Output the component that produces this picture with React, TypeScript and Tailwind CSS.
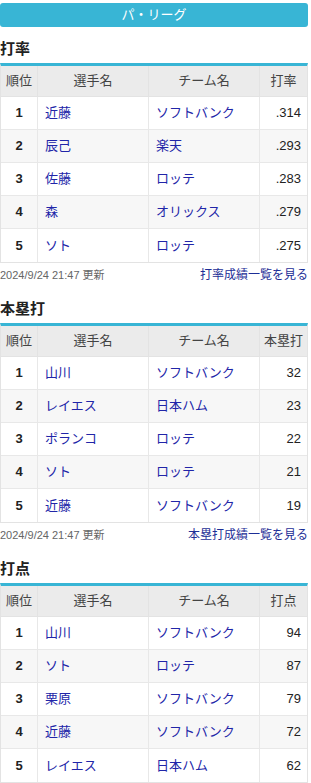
type Row = { rank: number; name: string; team: string; value: string };

type Section = {
  title: string;
  statLabel: string;
  linkText: string;
  rows: Row[];
};

const sections: Section[] = [
  {
    title: '打率',
    statLabel: '打率',
    linkText: '打率成績一覧を見る',
    rows: [
      { rank: 1, name: '近藤', team: 'ソフトバンク', value: '.314' },
      { rank: 2, name: '辰己', team: '楽天', value: '.293' },
      { rank: 3, name: '佐藤', team: 'ロッテ', value: '.283' },
      { rank: 4, name: '森', team: 'オリックス', value: '.279' },
      { rank: 5, name: 'ソト', team: 'ロッテ', value: '.275' },
    ],
  },
  {
    title: '本塁打',
    statLabel: '本塁打',
    linkText: '本塁打成績一覧を見る',
    rows: [
      { rank: 1, name: '山川', team: 'ソフトバンク', value: '32' },
      { rank: 2, name: 'レイエス', team: '日本ハム', value: '23' },
      { rank: 3, name: 'ポランコ', team: 'ロッテ', value: '22' },
      { rank: 4, name: 'ソト', team: 'ロッテ', value: '21' },
      { rank: 5, name: '近藤', team: 'ソフトバンク', value: '19' },
    ],
  },
  {
    title: '打点',
    statLabel: '打点',
    linkText: '',
    rows: [
      { rank: 1, name: '山川', team: 'ソフトバンク', value: '94' },
      { rank: 2, name: 'ソト', team: 'ロッテ', value: '87' },
      { rank: 3, name: '栗原', team: 'ソフトバンク', value: '79' },
      { rank: 4, name: '近藤', team: 'ソフトバンク', value: '72' },
      { rank: 5, name: 'レイエス', team: '日本ハム', value: '62' },
    ],
  },
];

function RankingTable({ section }: { section: Section }) {
  return (
    <div>
      <h3 className="h-[20px] mt-[12px] mb-[4px] text-[15px] leading-[20px] font-bold text-[#222]">
        {section.title}
      </h3>
      <div className="w-[308px] border border-[#e3e3e3] border-t-[3px] border-t-[#38b5d5]">
        <div className="grid grid-cols-[36px_111px_111px_1fr] h-[31px] bg-[#ebebeb] text-[13px] text-[#444] border-b border-[#e3e3e3]">
          <div className="flex items-center justify-center">順位</div>
          <div className="flex items-center justify-center border-l border-[#e3e3e3]">選手名</div>
          <div className="flex items-center justify-center border-l border-[#e3e3e3]">チーム名</div>
          <div className="flex items-center justify-center border-l border-[#e3e3e3]">{section.statLabel}</div>
        </div>
        {section.rows.map((r, i) => (
          <div
            key={r.rank}
            className={`grid grid-cols-[36px_111px_111px_1fr] h-[33px] text-[13px] ${i % 2 === 1 ? 'bg-[#f7f7f7]' : 'bg-white'} ${i < 4 ? 'border-b border-[#e8e8e8]' : ''}`}
          >
            <div className="flex items-center justify-center font-bold text-[#222]">{r.rank}</div>
            <div className="flex items-center pl-[7px] border-l border-[#e8e8e8] text-[#2125a8]">{r.name}</div>
            <div className="flex items-center pl-[7px] border-l border-[#e8e8e8] text-[#2125a8]">{r.team}</div>
            <div className="flex items-center justify-end pr-[6px] border-l border-[#e8e8e8] text-[#222]">{r.value}</div>
          </div>
        ))}
      </div>
      {section.linkText && (
        <div className="w-[308px] flex justify-between items-center h-[24px]">
          <span className="text-[11px] text-[#666]">2024/9/24 21:47 更新</span>
          <span className="text-[12px] text-[#1d2e96]">{section.linkText}</span>
        </div>
      )}
    </div>
  );
}

export default function App() {
  return (
    <div
      className="w-[311px] bg-white pt-[3px]"
      style={{ fontFamily: '"Liberation Sans", "Noto Sans CJK JP", sans-serif' }}
    >
      <div className="w-[308px] h-[24px] rounded-[3px] bg-[#38b5d5] text-white text-[13px] flex items-center justify-center">
        パ・リーグ
      </div>
      {sections.map((s) => (
        <RankingTable key={s.title} section={s} />
      ))}
    </div>
  );
}
